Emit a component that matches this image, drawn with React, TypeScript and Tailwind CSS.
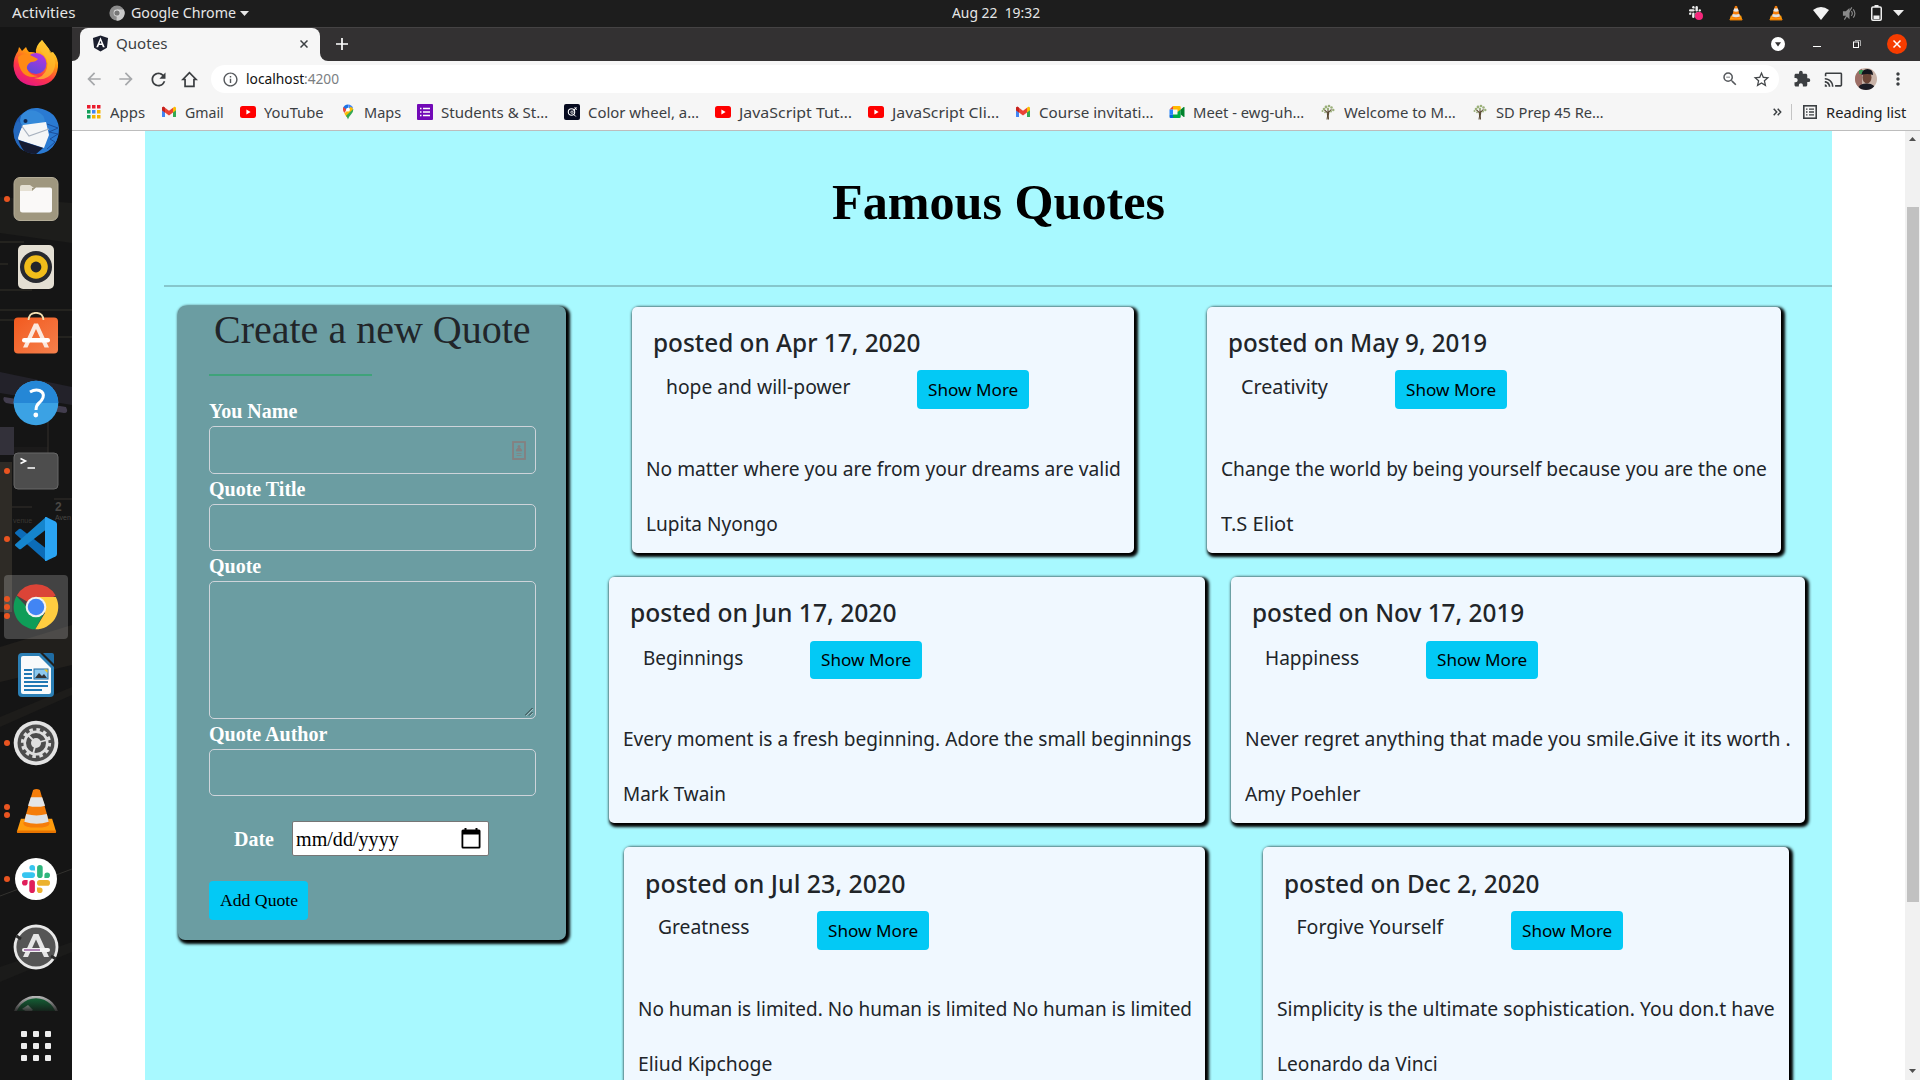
import React, { useLayoutEffect, useRef, useState } from "react";
import {
  MdArrowBack,
  MdArrowForward,
  MdRefresh,
  MdInfoOutline,
  MdZoomOut,
  MdStarBorder,
  MdExtension,
  MdCast,
  MdMoreVert,
} from "react-icons/md";

/** A single line of text scaled horizontally so that it fills exactly `w` pixels. */
function Fit({ w, className = "", children }: { w: number; className?: string; children: React.ReactNode }) {
  const ref = useRef<HTMLSpanElement>(null);
  const [scale, setScale] = useState(1);
  useLayoutEffect(() => {
    if (ref.current) setScale(w / ref.current.offsetWidth);
  }, [w]);
  return (
    <span className={"block shrink-0 text-left whitespace-pre " + className} style={{ width: w }}>
      <span ref={ref} className="inline-block origin-left" style={{ transform: `scaleX(${scale})` }}>
        {children}
      </span>
    </span>
  );
}

/* ---------- small icons ---------- */

const Vlc = ({ className }: { className: string }) => (
  <svg viewBox="0 0 44 46" className={className}>
    <path d="M6 31h32l4 13q.4 1.500-1.500 1.500h-37Q1.600 45.500 2 44z" fill="#ff9c0d" />
    <path d="M2 43h40v1.500q0 1-1.500 1h-37Q2 45.500 2 44.500z" fill="#e87400" />
    <path d="M18.500 1.500q3.500-2 7 0L35.500 36q-1 4-13.500 4T8.500 36z" fill="#f57d0a" />
    <path d="M16.200 9h11.600l3 8.500q-8.800 2.500-17.500 0z" fill="#e4e6e8" />
    <path d="M11.500 26q10.500 3 21 0l2 8q-12.500 4-25 0z" fill="#dfe1e3" />
  </svg>
);

const YouTube = () => (
  <svg viewBox="0 0 16 16" className="size-4">
    <rect y="2" width="16" height="12" rx="2.500" fill="#f00" />
    <path d="M6.400 5.500v5L10.600 8z" fill="#fff" />
  </svg>
);
const Gmail = () => (
  <svg viewBox="0 0 16 16" className="size-4">
    <path d="M1 4v8.500q0 .500.500.500H4V6.500z" fill="#4285f4" />
    <path d="M15 4v8.500q0 .500-.500.500H12V6.500z" fill="#34a853" />
    <path d="M12 3.700 13.300 2.800Q15 2.300 15 4.200v2L12 8.500z" fill="#fbbc04" />
    <path d="M1 4.200Q1 2.300 2.700 2.800L4 3.700 8 6.700l4-3v4.800l-4 3-4-3-3-2.300z" fill="#ea4335" />
    <path d="M1 4.200Q1 2.300 2.700 2.800L4 3.700v4.800L1 6.200z" fill="#c5221f" />
  </svg>
);
const AppsGrid = () => (
  <svg viewBox="0 0 16 16" className="size-4">
    {["#ea1c2d", "#ea1c2d", "#ea1c2d", "#13a05a", "#4285f4", "#f4b400", "#13a05a", "#f4b400", "#f4b400"].map((c, i) => (
      <rect key={i} x={1 + (i % 3) * 5} y={1 + Math.floor(i / 3) * 5} width="3.500" height="3.500" fill={c} />
    ))}
  </svg>
);
const MapsPin = () => (
  <svg viewBox="0 0 16 16" className="size-4">
    <path d="M8 .500a5.300 5.300 0 0 0-5 3.800L8 6z" fill="#1a73e8" />
    <path d="M8 .500a5.300 5.300 0 0 1 5 3.500L9 7z" fill="#4285f4" />
    <path d="M3.500 3 6.500 5.500 4.500 9Q2 6 3.500 3z" fill="#ea4335" />
    <path d="m6.500 7.500 4-4.800q2.800 1 2.800 3.300L6.500 13 4.300 9.500z" fill="#fbbc04" />
    <path d="M13.300 5Q13.500 8 11 10.500T8 15.500Q7.500 14 6 11.800z" fill="#34a853" />
    <circle cx="8" cy="5.700" r="1.900" fill="#fff" />
  </svg>
);
const FormsIcon = () => (
  <svg viewBox="0 0 16 16" className="size-4">
    <rect width="16" height="16" rx="1" fill="#7209b7" />
    <path d="M3 4.500h1.500M3 8h1.500M3 11.500h1.500M6 4.500h7M6 8h7M6 11.500h7" stroke="#fff" strokeWidth="1.600" />
  </svg>
);
const ColorIcon = () => (
  <svg viewBox="0 0 16 16" className="size-4">
    <rect width="16" height="16" rx="2" fill="#070b20" />
    <circle cx="7.500" cy="8" r="3.200" fill="none" stroke="#fff" strokeWidth="1.100" />
    <circle cx="8" cy="8.200" r="1.200" fill="none" stroke="#fff" strokeWidth=".8" />
    <path d="m9.500 6.500 3-3M9.800 10.500l2 2M11 4.500V3M11.500 5.200H13" stroke="#fff" />
  </svg>
);
const MeetIcon = () => (
  <svg viewBox="0 0 16 16" className="size-4">
    <path d="M.500 5.500 4 2v3.500z" fill="#ea4335" />
    <path d="M.500 5.500H4v5H.500z" fill="#2684fc" />
    <path d="M.500 10.500H4V14H1.500q-1 0-1-1z" fill="#0066da" />
    <path d="M4 2h6.500q1.200 0 1.200 1v3.500L8.500 8V5.500H4z" fill="#ffba00" />
    <path d="M4 10.500h4.500V8l3.200-2.500v7.500q0 1-1.200 1H4z" fill="#00ac47" />
    <path d="m11.700 5.500 3-2.500q.8-.400.800.500v9q0 .9-.8.500l-3-2.500z" fill="#00832d" />
  </svg>
);
const TreeIcon = () => (
  <svg viewBox="0 0 16 16" className="size-4">
    <path d="M7 15.500Q8 11 7.300 8.500L4.500 6M8.500 15.500Q8 11 8.800 8L11.500 5.500M8 9V4" stroke="#5b4a33" strokeWidth="1.100" fill="none" />
    <g fill="#9bb07a">
      <circle cx="4" cy="5" r="1.300" />
      <circle cx="2.500" cy="7" r="1" />
      <circle cx="6" cy="3" r="1.400" />
      <circle cx="9" cy="2" r="1.300" />
      <circle cx="11.500" cy="3.500" r="1.300" />
      <circle cx="13.300" cy="6" r="1.200" />
      <circle cx="8" cy="5" r="1.200" />
      <circle cx="11" cy="7.500" r="1" />
      <circle cx="5" cy="8.300" r=".9" />
    </g>
  </svg>
);

const SlackMark = ({ className, mono }: { className: string; mono?: boolean }) => {
  const c = mono ? ["#eee", "#eee", "#eee", "#eee"] : ["#36c5f0", "#2eb67d", "#ecb22e", "#e01e5a"];
  return (
    <svg viewBox="0 0 28 28" className={className}>
      <g fill={c[0]}>
        <rect y="7.300" width="13" height="5.600" rx="2.800" />
        <path d="M10.200 0A2.800 2.800 0 0 1 13 2.800v2.800h-2.800a2.800 2.800 0 0 1 0-5.600z" />
      </g>
      <g fill={c[1]}>
        <rect x="15.100" width="5.600" height="13" rx="2.800" />
        <path d="M28 10.200A2.800 2.800 0 0 1 25.200 13h-2.800v-2.800a2.800 2.800 0 0 1 5.600 0z" />
      </g>
      <g fill={c[2]}>
        <rect x="15" y="15.100" width="13" height="5.600" rx="2.800" />
        <path d="M17.800 28a2.800 2.800 0 0 1-2.800-2.800v-2.800h2.800a2.800 2.800 0 0 1 0 5.600z" />
      </g>
      <g fill={c[3]}>
        <rect x="7.300" y="15" width="5.600" height="13" rx="2.800" />
        <path d="M0 17.800A2.800 2.800 0 0 1 2.800 15h2.800v2.800a2.800 2.800 0 0 1-5.600 0z" />
      </g>
    </svg>
  );
};

/* ---------- dock icons ---------- */

const Firefox = () => (
  <svg viewBox="0 0 46 46" className="size-[46px]">
    <defs>
      <linearGradient id="ffa" x1=".8" y1="0" x2=".3" y2="1">
        <stop offset="0" stopColor="#fff44f" />
        <stop offset=".4" stopColor="#ff980e" />
        <stop offset=".7" stopColor="#ff3647" />
        <stop offset="1" stopColor="#e31587" />
      </linearGradient>
      <linearGradient id="ffb" x1=".7" y1="0" x2=".3" y2="1">
        <stop offset="0" stopColor="#b833e1" />
        <stop offset="1" stopColor="#5b4bd8" />
      </linearGradient>
    </defs>
    <path d="M29 0Q33 5 36 9l1 4 3-1Q46 19 45 27 43 45 23 46 2 45 .500 26 .500 17 5 11l1-4q2 2 3 4l4-4q1 3 3 5 4-.500 7 1Q22 6 29 0z" fill="url(#ffa)" />
    <circle cx="23" cy="23.500" r="10.500" fill="url(#ffb)" />
    <path d="M5 17Q11 12 17 15l8 4q-2 3-7 3-5 3-4 7 3 7 11 7-9 3-15-3Q5 27 5 17z" fill="#ff8a16" />
    <path d="M29 0Q24 7 29 13q7 6 5 15Q31 38 21 38q12 4 19-6 5-9-1-19z" fill="#ffbd2e" opacity=".75" />
  </svg>
);
const Thunderbird = () => (
  <svg viewBox="0 0 48 48" className="size-[48px]">
    <circle cx="24" cy="24.500" r="22.500" fill="#1d5cb4" />
    <path d="M9 9Q15 0 26 1q19 3 21 20 0 15-11 23-5 3-12 3 12-8 12-22Q35 12 18 14z" fill="#2a7ad2" />
    <path d="M9 9Q15 1 24 4q9 3 9 12L13 21Q6 17 9 9z" fill="#3489d9" />
    <path d="M11 18 34 15l3 13-5 13L4 32z" fill="#f5f6f7" />
    <path d="m9 18 8 11 20-7" fill="none" stroke="#a8b2bf" strokeWidth="1.200" />
    <path d="m3 32 28 9-7 6Q9 47 3 32z" fill="#151b31" />
    <path d="M1.500 24Q2 38 12 44q-5-7-6-13l4-13-4-4Q1.500 19 1.500 24z" fill="#2468bd" />
    <circle cx="13.500" cy="14" r="2" fill="#10274f" />
    <path d="m35 17 11 4-9 4 9 2-8 5 5 3-8 7" fill="none" stroke="#1c4f9c" strokeWidth="1" />
  </svg>
);
const Files = () => (
  <svg viewBox="0 0 46 46" className="size-[46px]">
    <rect x="1" y="1.500" width="44" height="43" rx="6" fill="#9f977f" stroke="#b4ad98" />
    <path d="M7 11q0-2 2-2h8l4 3h-2v6H7z" fill="#e5e0d3" />
    <path d="M7 15h12l4-3.500h14q2 0 2 2V34q0 2.500-2.500 2.500h-27Q7 36.500 7 34z" fill="#faf9f8" />
  </svg>
);
const Rhythmbox = () => (
  <svg viewBox="0 0 46 46" className="size-[46px]">
    <rect x="5" y="1" width="36" height="44" rx="5" fill="#e4dfd3" />
    <circle cx="23" cy="23" r="16" fill="#27292f" />
    <circle cx="23" cy="23" r="11.800" fill="#f1bd1a" />
    <circle cx="23" cy="23" r="5.400" fill="#23252b" />
  </svg>
);
const Software = () => (
  <svg viewBox="0 0 46 46" className="size-[46px]">
    <defs>
      <linearGradient id="sw" x1="0" y1="0" x2="1" y2="1">
        <stop offset="0" stopColor="#f25a1f" />
        <stop offset="1" stopColor="#f5804c" />
      </linearGradient>
    </defs>
    <rect x="1" y="5.500" width="44" height="36" rx="4" fill="url(#sw)" />
    <path d="M15.500 8Q16 .800 23 .800T30.500 8" fill="none" stroke="#f3dfb2" strokeWidth="1.700" />
    <path d="M21 11.500h4L36 35.500h-4.500L23 17l-8.500 18.500H10z" fill="#fbe8de" />
    <rect x="9" y="26" width="28" height="4.500" rx="2.200" fill="#fff" />
  </svg>
);
const Help = () => (
  <svg viewBox="0 0 46 46" className="size-[46px]">
    <circle cx="23" cy="23" r="22.300" fill="#3ba2e4" />
    <path d="M.700 23a22.300 22.300 0 0 1 44.600 0z" fill="#2587d6" />
    <path d="M17 12q5-3 9.500-1.500 5 2 3.500 7-1 3-4 5.500-3 2.500-3 7" fill="none" stroke="#fff" strokeWidth="3" />
    <circle cx="22.800" cy="35" r="2.400" fill="#fff" />
  </svg>
);
const Terminal = () => (
  <svg viewBox="0 0 46 46" className="size-[46px]">
    <rect x="1" y="5" width="44" height="36" rx="4" fill="#4d4d4d" stroke="#686868" />
    <path d="m7.500 10.500 5 2.500-5 2.500M14.500 20H22" stroke="#fff" strokeWidth="1.600" fill="none" />
  </svg>
);
const VsCode = () => (
  <svg viewBox="0 0 44 44" className="size-[44px]">
    <path d="M1 15.500 5 12q1-.600 2 0l27 21v10L32 44 1.500 17q-.900-.800-.500-1.500z" fill="#0c6cb8" />
    <path d="M1 28.500 5 32q1 .600 2 0l27-21V1L32 0 1.500 27q-.900.800-.500 1.500z" fill="#1585cd" />
    <path d="M32 0l9.500 4.500Q43 5.500 43 7v30q0 1.500-1.500 2.500L32 44q-1 .400-1-.500V.800Q31-.200 32 0z" fill="#2aa4f3" />
  </svg>
);
const Chrome = ({ className }: { className: string }) => (
  <svg viewBox="0 0 48 48" className={className}>
    <path d="M24 24 4 12a23.300 23.300 0 0 1 40.500 0z" fill="#db4437" />
    <path d="M24 24h-9.500L3.700 12.500a23.300 23.300 0 0 0 19.500 34.800L33 29z" fill="#0f9d58" />
    <path d="M24 24 24 13.500h20.700A23.300 23.300 0 0 1 23.300 47.300L33.500 30z" fill="#ffcd40" />
    <circle cx="24" cy="24" r="10.800" fill="#f1f1f1" />
    <circle cx="24" cy="24" r="8.600" fill="#4285f4" />
  </svg>
);
const Writer = () => (
  <svg viewBox="0 0 46 46" className="size-[46px]">
    <path d="M9 1h18L41 15v26q0 4-4 4H9q-4 0-4-4V5q0-4 4-4z" fill="#2b7fb5" />
    <path d="M10 4h16l12 12v24q0 2-2 2H10q-2 0-2-2V6q0-2 2-2z" fill="#f8fafb" />
    <path d="M30 1h9q2 0 2 2v9z" fill="#1f6ca3" />
    <path d="M11 18h8M11 22h8M11 26h8M11 30h24M11 34h24M11 38h18" stroke="#1f78b4" strokeWidth="1.800" />
    <rect x="21" y="17" width="14" height="10" fill="#8dc9ee" stroke="#1f6ca3" />
    <path d="m22 26 4-5 3 3 2-2 3 4z" fill="#333" />
    <path d="M31 17.500h3.500V21z" fill="#f5c518" />
  </svg>
);
const Settings = () => (
  <svg viewBox="0 0 46 46" className="size-[46px]">
    <circle cx="23" cy="23" r="22.300" fill="#e3e3e3" />
    <circle cx="23" cy="23" r="18.500" fill="#4c4c4c" />
    <circle cx="23" cy="23" r="13.600" fill="none" stroke="#dedede" strokeWidth="3" strokeDasharray="3.560 3.560" />
    <circle cx="23" cy="23" r="11.300" fill="none" stroke="#dedede" strokeWidth="2.600" />
    <circle cx="23" cy="23" r="5" fill="#dedede" />
    <path d="m23 23 11-3M23 23l-3 11M23 23l-8-8" stroke="#dedede" strokeWidth="1.800" />
  </svg>
);
const Slack = () => (
  <span className="flex size-[42px] items-center justify-center rounded-full bg-white">
    <SlackMark className="size-7" />
  </span>
);
const Updater = () => (
  <svg viewBox="0 0 46 46" className="size-[46px]">
    <circle cx="23" cy="23" r="21" fill="#555" stroke="#e8e8e8" strokeWidth="2.800" />
    <path d="M3.500 12 8 15M38 32l5 3" stroke="#2a2a2a" strokeWidth="3" />
    <path d="M20.500 10h5L36 33h-5l-8-17.500L15 33h-5z" fill="#e6e6e6" />
    <rect x="9" y="24" width="28" height="4" rx="2" fill="#f3f3f3" />
    <path d="M11 26h16" stroke="#8c4a95" strokeWidth="1.300" />
  </svg>
);

type DockItem = { icon: React.ReactNode; dots: number; active?: boolean };
const dockItems: DockItem[] = [
  { icon: <Firefox />, dots: 0 },
  { icon: <Thunderbird />, dots: 0 },
  { icon: <Files />, dots: 1 },
  { icon: <Rhythmbox />, dots: 0 },
  { icon: <Software />, dots: 0 },
  { icon: <Help />, dots: 0 },
  { icon: <Terminal />, dots: 1 },
  { icon: <VsCode />, dots: 1 },
  { icon: <Chrome className="size-[46px]" />, dots: 3, active: true },
  { icon: <Writer />, dots: 0 },
  { icon: <Settings />, dots: 1 },
  { icon: <Vlc className="h-[46px] w-[43px]" />, dots: 2 },
  { icon: <Slack />, dots: 1 },
  { icon: <Updater />, dots: 0 },
];

function Wallpaper() {
  return (
    <svg viewBox="0 0 72 1053" className="absolute inset-0 h-full w-full">
      <rect width="72" height="1053" fill="#151515" />
      <path d="M0 170 72 176v40L0 206z" fill="#1d1d1b" />
      <path d="M0 215h24M0 237h8M0 263h32M0 283h72M0 293h40M24 310h48" stroke="#35322a" />
      <path d="M0 345 72 360v18L0 366z" fill="#23222a" />
      <path d="m4 370 62 10q3 6-2 6L6 376q-4-3-2-6z" fill="#4e475c" opacity=".8" />
      <path d="M0 400h14v28H0z" fill="#33313a" />
      <path d="M0 435h12v150H0z" fill="#2e2b26" />
      <path d="M14 420h34v24H14z" fill="#1b1a1a" />
      <path d="M48 385v70M12 480h20M54 472h18" stroke="#34312c" />
      <text x="55" y="484" fill="#4a4744" fontFamily="Liberation Sans" fontWeight="bold" fontSize="12">2</text>
      <text x="55" y="493" fill="#4a4744" fontFamily="Liberation Sans" fontSize="7">Aven</text>
      <text x="13" y="496" fill="#3a3733" fontFamily="Liberation Sans" fontSize="7">venue</text>
      <path d="M0 620 72 598v40L0 655z" fill="#211f1c" />
      <path d="M0 690 72 660v8L0 700z" fill="#1d1c1a" />
      <path d="m0 869 72-27" stroke="#33322f" />
      <path d="M0 940 72 915v10L0 955z" fill="#1b1b1a" />
    </svg>
  );
}

function Dock() {
  return (
    <aside className="relative flex h-[1053px] w-[72px] shrink-0 flex-col overflow-hidden">
      <Wallpaper />
      <div className="relative flex flex-col pt-[2px]">
        {dockItems.map((item, i) => (
          <div key={i} className="flex h-[68px] items-center">
            <div
              className={
                item.active
                  ? "relative mx-1 flex size-16 items-center justify-center rounded bg-white/20"
                  : "relative mx-1 flex size-16 items-center justify-center"
              }
            >
              {item.icon}
              <div className="absolute inset-y-0 left-0 flex flex-col justify-center gap-[2.500px]">
                {Array.from({ length: item.dots }, (_, k) => (
                  <span key={k} className="size-1.5 rounded-full bg-[#e95420]" />
                ))}
              </div>
            </div>
          </div>
        ))}
        <div className="mt-[15px] flex h-[15px] justify-center overflow-hidden">
          <svg viewBox="0 0 46 16" className="h-4 w-[46px]">
            <defs>
              <linearGradient id="fade" x1="0" y1="0" x2="0" y2="1">
                <stop offset="0" stopColor="#151515" stopOpacity="0" />
                <stop offset="1" stopColor="#151515" stopOpacity=".9" />
              </linearGradient>
            </defs>
            <circle cx="23" cy="23" r="22" fill="#146b3a" stroke="#bbb" strokeWidth="2.500" />
            <path d="m9 13 6-4 5 5-4 3z" fill="#c4d6cb" />
            <rect width="46" height="16" fill="url(#fade)" />
          </svg>
        </div>
        <div className="mt-5 grid grid-cols-[6px_6px_6px] justify-center gap-x-[6px] gap-y-[6px]">
          {Array.from({ length: 9 }, (_, k) => (
            <span key={k} className="size-1.5 rounded-[1px] bg-[#eee]" />
          ))}
        </div>
      </div>
    </aside>
  );
}

function TopBar() {
  return (
    <header className="flex h-[27px] items-center bg-[#1d1d1d] pb-[2px] text-[14.500px] leading-[25px] text-[#e6e6e6]">
      <div className="flex w-[952px] items-center pl-3">
        <Fit w={63}>Activities</Fit>
        <svg viewBox="0 0 16 16" className="ml-[34px] size-4">
          <circle cx="8" cy="8" r="7.600" fill="#8c8c8c" />
          <path d="M8 8V4.500h6.800A7.600 7.600 0 0 1 7.500 15.600z" fill="#c9c9c9" />
          <circle cx="8" cy="8" r="3.400" fill="#ddd" />
          <circle cx="8" cy="8" r="2.600" fill="#777" />
        </svg>
        <Fit w={105} className="ml-[6px]">Google Chrome</Fit>
        <svg viewBox="0 0 9 5" className="mt-px ml-1 h-[5px] w-[9px]">
          <path d="M0 0h9L4.500 5z" fill="#e6e6e6" />
        </svg>
      </div>
      <Fit w={88}>Aug 22  19:32</Fit>
      <div className="ml-auto flex items-center pt-px pr-4">
        <span className="relative size-[14px]">
          <SlackMark mono className="size-3" />
          <span className="absolute right-0 bottom-0 size-2 rounded-full bg-[#f5267b]" />
        </span>
        <Vlc className="ml-[26px] h-4 w-[14px]" />
        <Vlc className="ml-[26px] h-4 w-[14px]" />
        <svg viewBox="0 0 16 13" className="ml-[30px] h-[13px] w-4">
          <path d="M0 3Q8-3 16 3L8 13z" fill="#f2f2f2" />
        </svg>
        <svg viewBox="0 0 16 16" className="ml-[13px] size-[15px]">
          <path d="M1 5.500h3L8 2v12l-4-3.500H1z" fill="#8a8a8a" />
          <path d="M10 5.500q2 2.500 0 5M12 3.500q3.500 4.500 0 9M2.500 14.500l8-13" stroke="#8a8a8a" strokeWidth="1.200" fill="none" />
        </svg>
        <svg viewBox="0 0 11 16" className="ml-[14px] h-4 w-[11px]">
          <path d="M3.500 0h4v2h-4z" fill="#eee" />
          <rect x=".750" y="2" width="9.500" height="13.200" rx="1.200" fill="none" stroke="#eee" strokeWidth="1.500" />
          <path d="M2.500 10.500h6v3.500h-6z" fill="#eee" />
        </svg>
        <svg viewBox="0 0 11 6" className="ml-[11px] h-[6px] w-[11px]">
          <path d="M0 0h11L5.500 6z" fill="#eee" />
        </svg>
      </div>
    </header>
  );
}

function TabStrip() {
  return (
    <div className="flex h-[34px] border-t border-[#454344] bg-[#333132]">
      <div className="flex w-2 items-end bg-[#f6f6f6]">
        <span className="h-full w-2 rounded-br-lg bg-[#333132]" />
      </div>
      <div className="flex w-[240px] items-center rounded-t-lg bg-[#f6f6f6] pb-[2px] pl-3 text-[14.500px] leading-[22px] text-[#3c4043]">
        <svg viewBox="0 0 17 18" className="h-[17px] w-[17px]">
          <path d="M8.500.500 16.500 3.300 15.300 13.500 8.500 17.500 1.700 13.500.500 3.300z" fill="#1b1f2e" />
          <path d="M8.500 2.500 13 13h-2l-.900-2.300H6.900L6 13H4zm0 3.500L7.400 9h2.200z" fill="#fff" />
        </svg>
        <Fit w={51} className="-mt-px ml-[7px]">Quotes</Fit>
        <svg viewBox="0 0 8 8" className="ml-[133px] size-2">
          <path d="m.500.500 7 7m0-7-7 7" stroke="#3c4043" strokeWidth="1.500" />
        </svg>
      </div>
      <div className="flex w-2 items-end bg-[#f6f6f6]">
        <span className="h-full w-2 rounded-bl-lg bg-[#333132]" />
      </div>
      <svg viewBox="0 0 12 12" className="mt-[10px] ml-2 size-3">
        <path d="M6 0v12M0 6h12" stroke="#fff" strokeWidth="1.700" />
      </svg>
      <div className="ml-auto flex items-center pr-[13px] pb-px">
        <svg viewBox="0 0 14 14" className="size-[14px]">
          <circle cx="7" cy="7" r="7" fill="#fff" />
          <path d="M4 5.200h6L7 9.500z" fill="#333132" />
        </svg>
        <span className="mt-[5px] ml-7 h-px w-2 bg-white" />
        <svg viewBox="0 0 8 8" className="ml-8 size-2">
          <path d="M2 .500h5.500V6" fill="none" stroke="#aaa" />
          <rect x=".5" y="2" width="5" height="5.500" fill="none" stroke="#fff" />
        </svg>
        <svg viewBox="0 0 20 20" className="ml-[26px] size-5">
          <circle cx="10" cy="10" r="10" fill="#f63c00" />
          <path d="m6.500 6.500 7 7m0-7-7 7" stroke="#fff" strokeWidth="1.500" />
        </svg>
      </div>
    </div>
  );
}

function AddressBar() {
  return (
    <div className="flex h-9 items-center text-[#3b3e41]">
      <MdArrowBack className="ml-3 size-5 text-[#a6a8ab]" />
      <MdArrowForward className="ml-3 size-5 text-[#a6a8ab]" />
      <MdRefresh className="ml-3 size-[21px]" />
      <svg viewBox="0 0 17 18" className="ml-[12px] h-[17px] w-[17px]">
        <path d="M8.500 1.800 1.500 9h2.300v7.200h9.400V9h2.300z" fill="none" stroke="#3b3e41" strokeWidth="1.800" />
      </svg>
      <div className="ml-[13px] flex h-7 w-[1568px] items-center rounded-full bg-white pr-2 pl-[11px]">
        <MdInfoOutline className="size-[17px] text-[#55585c]" />
        <div className="ml-[7px] flex pb-[2px] text-[14.500px] leading-[26px]">
          <Fit w={58} className="text-[#111]">localhost</Fit>
          <Fit w={35} className="text-[#7b7e82]">:4200</Fit>
        </div>
        <MdZoomOut className="ml-auto size-[18px] text-[#55585c]" />
        <MdStarBorder className="ml-[13px] size-[19px] text-[#44474a]" />
      </div>
      <MdExtension className="ml-[14px] size-[18px]" />
      <MdCast className="ml-[13px] size-[19px]" />
      <svg viewBox="0 0 22 22" className="ml-[12px] size-[22px]">
        <clipPath id="av">
          <circle cx="11" cy="11" r="11" />
        </clipPath>
        <g clipPath="url(#av)">
          <rect width="22" height="22" fill="#c9b3a8" />
          <rect width="7" height="22" fill="#9d6f66" />
          <path d="M4 2h4v4H4z" fill="#3f9a58" />
          <ellipse cx="12" cy="9.500" rx="4.500" ry="6" fill="#6b4436" />
          <path d="M6.500 7Q7 1 12.500 1T18 7q-6-2-11.500 0z" fill="#15151c" />
          <path d="M3 22q0-7 9-6.500T20 22z" fill="#1c1c24" />
        </g>
      </svg>
      <MdMoreVert className="ml-[11px] size-5" />
    </div>
  );
}

const bookmarks: { icon: React.ReactNode; text: string; w: number }[] = [
  { icon: <AppsGrid />, text: "Apps", w: 35 },
  { icon: <Gmail />, text: "Gmail", w: 39 },
  { icon: <YouTube />, text: "YouTube", w: 60 },
  { icon: <MapsPin />, text: "Maps", w: 37 },
  { icon: <FormsIcon />, text: "Students & St…", w: 107 },
  { icon: <ColorIcon />, text: "Color wheel, a…", w: 111 },
  { icon: <YouTube />, text: "JavaScript Tut…", w: 113 },
  { icon: <YouTube />, text: "JavaScript Cli…", w: 107 },
  { icon: <Gmail />, text: "Course invitati…", w: 114 },
  { icon: <MeetIcon />, text: "Meet - ewg-uh…", w: 111 },
  { icon: <TreeIcon />, text: "Welcome to M…", w: 112 },
  { icon: <TreeIcon />, text: "SD Prep 45 Re…", w: 108 },
];

function BookmarksBar() {
  return (
    <div className="flex h-[34px] items-center border-b border-[#bdbdbd] pb-1 pl-[14px] text-[14.500px] leading-[22px] text-[#3c4043]">
      <div className="flex items-center gap-4">
        {bookmarks.map((b, i) => (
          <div key={i} className="flex items-center gap-2">
            {b.icon}
            <Fit w={b.w}>{b.text}</Fit>
          </div>
        ))}
      </div>
      <svg viewBox="0 0 9 8" className="mt-px ml-auto h-2 w-[9px]">
        <path d="m.7.700 3 3.300-3 3.300M4.700.700l3 3.300-3 3.300" fill="none" stroke="#3c4043" strokeWidth="1.500" />
      </svg>
      <span className="ml-[9px] h-4 w-px bg-[#c4c4c4]" />
      <svg viewBox="0 0 14 14" className="ml-[11px] size-[14px]">
        <rect x=".8" y=".8" width="12.400" height="12.400" fill="none" stroke="#3c4043" strokeWidth="1.600" />
        <path d="M3 4.200h1.500M3 7h1.500M3 9.800h1.500M6 4.200h5M6 7h5M6 9.800h5" stroke="#3c4043" strokeWidth="1.300" />
      </svg>
      <Fit w={80} className="mr-[14px] ml-[9px] text-[#222]">Reading list</Fit>
    </div>
  );
}

/* ---------- page ---------- */

type Quote = {
  card: string;
  row: string;
  date: [string, number];
  title: [string, number];
  quote: [string, number];
  author: [string, number];
};

const r1 = "mt-[13px] h-[39px]";
const r2 = "mt-[14px] h-[38px]";

const rows: Quote[][] = [
  [
    {
      card: "ml-[66px] w-[502px]",
      row: r1,
      date: ["posted on Apr 17, 2020", 267],
      title: ["hope and will-power", 184],
      quote: ["No matter where you are from your dreams are valid", 475],
      author: ["Lupita Nyongo", 132],
    },
    {
      card: "ml-[73px] w-[573.500px]",
      row: r1,
      date: ["posted on May 9, 2019", 259],
      title: ["Creativity", 87],
      quote: ["Change the world by being yourself because you are the one", 546],
      author: ["T.S Eliot", 72],
    },
  ],
  [
    {
      card: "ml-[43px] w-[596px]",
      row: r2,
      date: ["posted on Jun 17, 2020", 267],
      title: ["Beginnings", 100],
      quote: ["Every moment is a fresh beginning. Adore the small beginnings", 568],
      author: ["Mark Twain", 103],
    },
    {
      card: "ml-[26px] w-[573.500px]",
      row: r2,
      date: ["posted on Nov 17, 2019", 272],
      title: ["Happiness", 94],
      quote: ["Never regret anything that made you smile.Give it its worth .", 546],
      author: ["Amy Poehler", 115],
    },
  ],
  [
    {
      card: "ml-[58px] w-[581px]",
      row: r1,
      date: ["posted on Jul 23, 2020", 261],
      title: ["Greatness", 92],
      quote: ["No human is limited. No human is limited No human is limited", 554],
      author: ["Eliud Kipchoge", 134],
    },
    {
      card: "ml-[58px] w-[526px]",
      row: r1,
      date: ["posted on Dec 2, 2020", 256],
      title: ["Forgive Yourself", 147],
      quote: ["Simplicity is the ultimate sophistication. You don.t have", 498],
      author: ["Leonardo da Vinci", 161],
    },
  ],
];

function QuoteCard({ q, last }: { q: Quote; last: boolean }) {
  return (
    <article
      className={
        "h-[246px] shrink-0 rounded-[5px] bg-[#f0f8ff] pl-[14px] text-[19.500px] leading-[30px] text-[#212529] shadow-[2px_2px_3px_2px_#000] " +
        (last ? "pt-[21px] " : "pt-5 ") +
        q.card
      }
    >
      <Fit w={q.date[1]} className="ml-[7px] text-[25px] font-medium">{q.date[0]}</Fit>
      <div className={"ml-[19.500px] flex items-start " + q.row}>
        <Fit w={q.title[1]} className={last ? "leading-8" : "pt-px leading-8"}>{q.title[0]}</Fit>
        <div className="ml-auto" />
        <button className="ml-[67px] flex h-full w-28 items-center justify-center rounded bg-[#03c9f5] text-[16px] text-black">
          <Fit w={90}>Show More</Fit>
        </button>
        <div className="grow-[9999]" />
      </div>
      <Fit w={q.quote[1]} className={last ? "mt-11" : "mt-[45px]"}>{q.quote[0]}</Fit>
      <Fit w={q.author[1]} className="mt-[25px]">{q.author[0]}</Fit>
    </article>
  );
}

function QuoteForm() {
  return (
    <form className="h-[634px] w-[388px] shrink-0 rounded-[7px] bg-[#6b9da2] px-[31px] font-['Liberation_Serif',serif] text-[20px] leading-[30px] font-bold text-white shadow-[2px_2px_3px_2px_#000]">
      <div className="flex h-[68px] justify-center text-[40px] leading-[48px] font-normal text-[#212529]">
        <Fit w={317} className="ml-px">Create a new Quote</Fit>
      </div>
      <div className="h-[2px] w-[163px] bg-[#3fa37a]" />
      <label className="mt-5 block h-[30px]">You Name</label>
      <div className="flex h-12 w-[327px] items-center justify-end rounded-[5px] border border-[#ced4da] pr-[9px]">
        <svg viewBox="0 0 14 19" className="h-[19px] w-[14px]">
          <rect x="1" y="1" width="12" height="17" fill="none" stroke="#868080" strokeWidth="1.800" />
          <circle cx="7" cy="5.500" r="1.500" fill="#868080" />
          <path d="M4.200 10Q4.500 7 7 7t2.800 3zM4.500 12.500h5M4.500 14.500h5" fill="#868080" stroke="#868080" strokeWidth=".8" />
        </svg>
      </div>
      <label className="block h-[30px]">Quote Title</label>
      <div className="h-[47px] w-[327px] rounded-[5px] border border-[#ced4da]" />
      <label className="block h-[30px]">Quote</label>
      <div className="flex h-[138px] w-[327px] items-end justify-end rounded-[5px] border border-[#ced4da] p-[2px]">
        <svg viewBox="0 0 8 8" className="size-2">
          <path d="M0 7.500 7.500 0M4 7.500 7.500 4" stroke="#2c3d3f" />
          <path d="M1 8 8 1M5 8l3-3" stroke="#c8dadb" strokeWidth=".6" />
        </svg>
      </div>
      <label className="block h-[30px]">Quote Author</label>
      <div className="h-[47px] w-[327px] rounded-[5px] border border-[#ced4da]" />
      <div className="mt-[25px] flex h-[35px] items-center pl-[25px]">
        <label className="w-[58px] pt-px">Date</label>
        <div className="flex h-[35px] w-[197px] items-center justify-between rounded-[2px] border border-[#767676] bg-white pr-[7px] pl-[3px] font-normal text-black">
          <Fit w={102.500} className="pt-px">mm/dd/yyyy</Fit>
          <svg viewBox="0 0 20 21" className="h-[21px] w-5">
            <path d="M2 1.500h16q1.500 0 1.500 1.500V19q0 1.500-1.500 1.500H2Q.500 20.500.500 19V3Q.500 1.500 2 1.500zM2.300 6.500v12.200h15.400V6.500z" fillRule="evenodd" />
            <path d="M3.500 0h2v3h-2zM14.500 0h2v3h-2z" />
          </svg>
        </div>
      </div>
      <button type="button" className="mt-[25px] flex h-[39px] w-[99px] items-center justify-center rounded bg-[#03c9f5] text-[17px] font-normal text-black">
        <Fit w={78}>Add Quote</Fit>
      </button>
    </form>
  );
}

function Page() {
  return (
    <div className="flex h-[949px] bg-white">
      <main className="ml-[73px] h-full w-[1687px] overflow-hidden bg-[#a8f9ff] pl-[19px]">
        <h1 className="flex h-[154px] justify-center pt-[41px] font-['Liberation_Serif',serif] text-[50px] leading-[60px] font-bold text-black">
          <Fit w={333}>Famous Quotes</Fit>
        </h1>
        <div className="h-[2px] bg-[#86c7cc]" />
        <div className="mt-[19px] flex pl-[14px]">
          <QuoteForm />
          <section className="mt-px flex shrink-0 flex-col gap-6">
            {rows.map((row, i) => (
              <div key={i} className="flex">
                {row.map((q) => (
                  <QuoteCard key={q.author[0]} q={q} last={i === 2} />
                ))}
              </div>
            ))}
          </section>
        </div>
      </main>
      <div className="ml-auto flex w-[15px] flex-col items-center bg-[#f1f1f1]">
        <svg viewBox="0 0 7 4" className="mt-[6px] h-1 w-[7px]">
          <path d="M0 4h7L3.500 0z" fill="#505050" />
        </svg>
        <div className="mt-[66px] h-[695px] w-[12px] bg-[#c1c1c1]" />
        <svg viewBox="0 0 7 4" className="mt-auto mb-[7px] h-1 w-[7px]">
          <path d="M0 0h7L3.500 4z" fill="#505050" />
        </svg>
      </div>
    </div>
  );
}

export default function App() {
  return (
    <div className="h-[1080px] w-[1920px] overflow-hidden bg-[#1d1d1d] font-['Noto_Sans',sans-serif]">
      <TopBar />
      <div className="flex">
        <Dock />
        <div className="w-[1848px]">
          <TabStrip />
          <div className="bg-[#f6f6f6]">
            <AddressBar />
            <BookmarksBar />
          </div>
          <Page />
        </div>
      </div>
    </div>
  );
}
